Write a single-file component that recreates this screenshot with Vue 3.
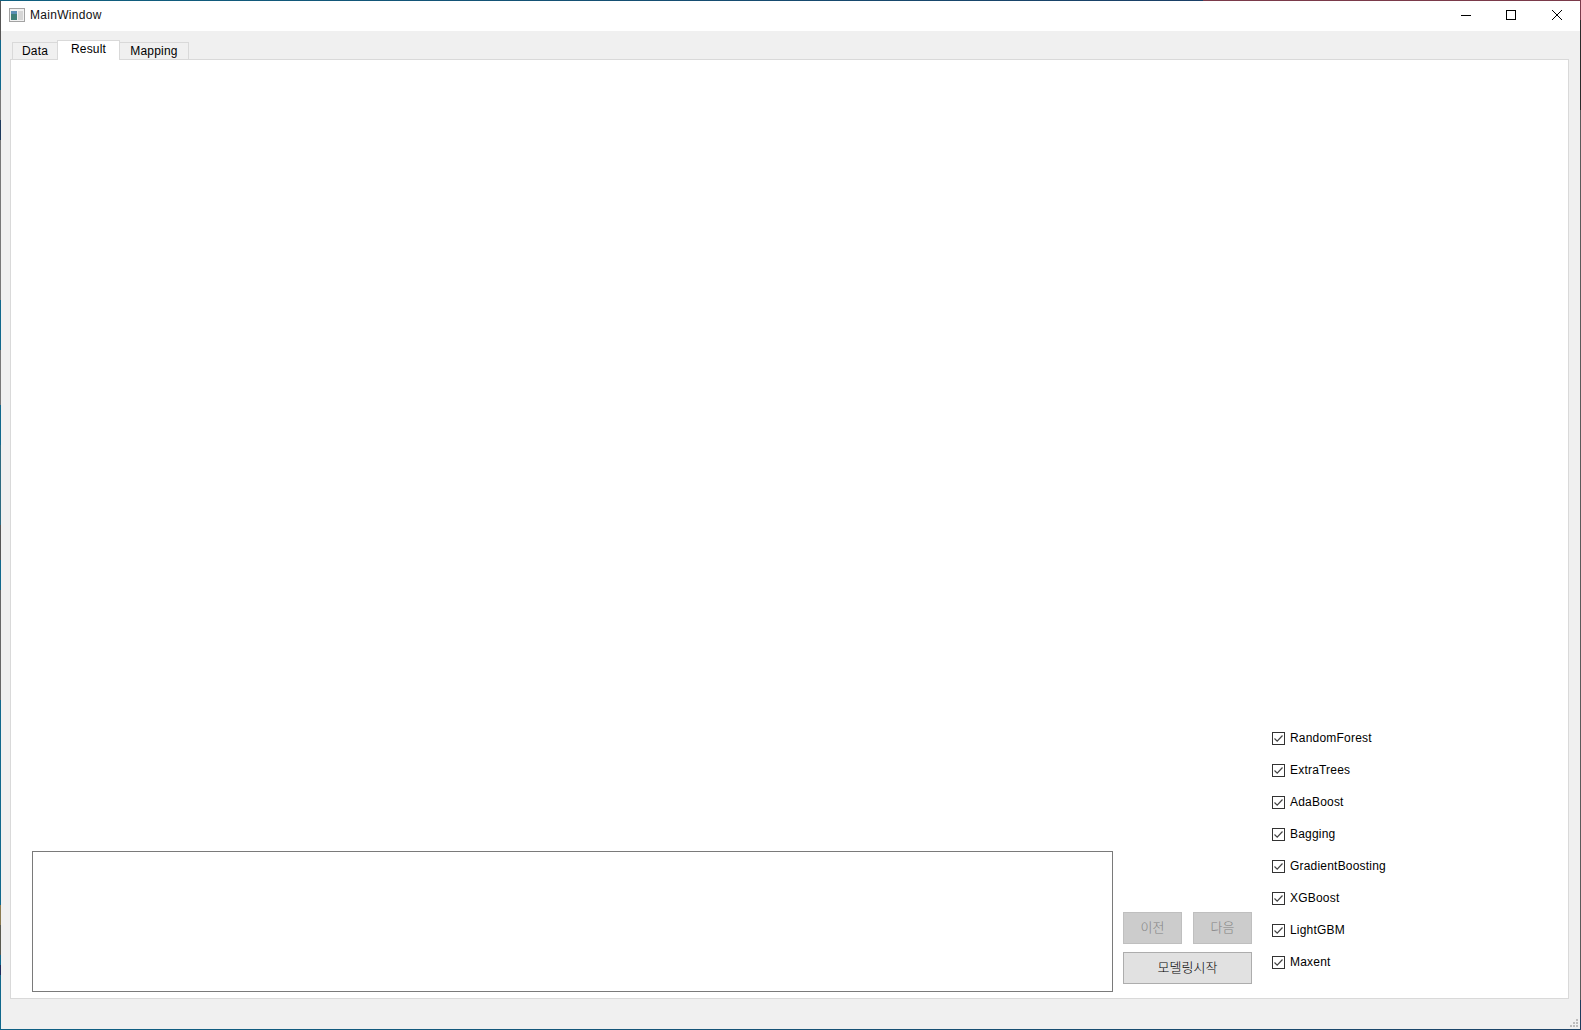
<script setup>
const models = ['RandomForest', 'ExtraTrees', 'AdaBoost', 'Bagging', 'GradientBoosting', 'XGBoost', 'LightGBM', 'Maxent']
const tabs = ['Data', 'Result', 'Mapping']
</script>

<template>
  <div class="window">
    <header class="titlebar">
      <svg class="appicon" width="16" height="14" viewBox="0 0 16 14">
        <rect x="0.5" y="0.5" width="15" height="13" fill="#f2f2f2" stroke="#a3a3a3" />
        <rect x="2" y="3" width="6" height="9" fill="#3f7f78" />
        <rect x="2" y="3" width="6" height="3" fill="#5b8fb5" />
        <rect x="9" y="3" width="5" height="9" fill="#d6d6d6" />
      </svg>
      <span class="title">MainWindow</span>
      <div class="controls">
        <svg width="12" height="12" viewBox="0 0 12 12"><path d="M1 6.5H11" stroke="#000" fill="none" /></svg>
        <svg width="12" height="12" viewBox="0 0 12 12"><rect x="1.5" y="1.5" width="9" height="9" stroke="#000" fill="none" /></svg>
        <svg class="close" width="12" height="12" viewBox="0 0 12 12"><path d="M1 1L11 11M11 1L1 11" stroke="#000" fill="none" /></svg>
      </div>
    </header>
    <main class="client">
      <nav class="tabs">
        <div v-for="t in tabs" :key="t" class="tab" :class="{ active: t === 'Result' }">{{ t }}</div>
      </nav>
      <section class="panel">
        <div class="bottom">
          <div class="textbox"></div>
          <div class="actions">
            <div class="nav-row">
              <button class="btn disabled">이전</button>
              <button class="btn disabled">다음</button>
            </div>
            <button class="btn">모델링시작</button>
          </div>
          <div class="checks">
            <label v-for="m in models" :key="m" class="check">
              <svg width="13" height="13" viewBox="0 0 13 13">
                <rect x="0.5" y="0.5" width="12" height="12" fill="#fff" stroke="#333" />
                <path d="M2.5 6.5L5.2 9.2L10.5 3.5" fill="none" stroke="#444" stroke-width="1.2" />
              </svg>
              <span>{{ m }}</span>
            </label>
          </div>
        </div>
      </section>
      <div class="status">
        <svg width="8" height="8" viewBox="0 0 8 8" fill="#bdbdbd">
          <rect x="6" y="0" width="2" height="2" />
          <rect x="3" y="3" width="2" height="2" /><rect x="6" y="3" width="2" height="2" />
          <rect x="0" y="6" width="2" height="2" /><rect x="3" y="6" width="2" height="2" /><rect x="6" y="6" width="2" height="2" />
        </svg>
      </div>
    </main>
  </div>
</template>

<style>
html, body { margin: 0; padding: 0; background: #f0f0f0; overflow: hidden; }
</style>

<style scoped>
.window {
  width: 1581px;
  height: 1030px;
  box-sizing: border-box;
  padding: 1px;
  display: flex;
  flex-direction: column;
  background-color: #f0f0f0;
  background-repeat: no-repeat;
  background-image:
    linear-gradient(90deg, #0f6080 0, #1a3f66 1203px, #7a3a4a 1203px, #7a3a4a 100%),
    linear-gradient(90deg, #0f6084, #1d4468),
    linear-gradient(180deg,
      #555 0 40px, #10688c 40px 90px, #777 90px 120px, #1d3a5c 120px 140px,
      #777 140px 300px, #10688c 300px 350px, #777 350px 405px, #10688c 405px 445px,
      #2d6a80 445px 525px, #555 525px 560px, #10688c 560px 590px, #666 590px 700px,
      #10688c 700px 905px, #8a7a50 905px 925px, #5a5a50 925px 955px, #10688c 955px 965px,
      #1d2a5c 965px 975px, #10688c 975px 1030px),
    linear-gradient(180deg,
      #7a3a4a 0 20px, #2a2a2a 20px 110px, #5a5a5a 110px 1000px, #1d3a5c 1000px 1030px);
  background-size: 100% 1px, 100% 1px, 1px 100%, 1px 100%;
  background-position: 0 0, 0 100%, 0 0, 100% 0;
  font-family: "Liberation Sans", Arial, "Noto Sans CJK KR", sans-serif;
  font-size: 12px;
  letter-spacing: 0.2px;
  color: #000;
}
.titlebar {
  height: 30px;
  box-sizing: border-box;
  padding: 0 0 2px 8px;
  flex: none;
  background: #fff;
  display: flex;
  align-items: center;
}
.appicon { margin-right: 5px; }
.title { font-size: 12px; color: #111; letter-spacing: 0.3px; }
.controls {
  margin-left: auto;
  display: flex;
  gap: 33px;
  padding-right: 17px;
}
.close { margin-left: 1px; }
.client {
  flex: 1;
  display: flex;
  flex-direction: column;
  padding: 9px 11px 0 9px;
  min-height: 0;
}
.tabs {
  display: flex;
  height: 19px;
  align-items: flex-end;
  padding-left: 2px;
  flex: none;
}
.tab {
  height: 18px;
  box-sizing: border-box;
  border: 1px solid #d9d9d9;
  border-bottom: none;
  border-left-width: 0;
  line-height: 16px;
  margin-bottom: -1px;
  position: relative;
  z-index: 0;
  text-align: center;
}
.tab:first-child { border-left-width: 1px; width: 46px; }
.tab.active {
  height: 20px;
  width: 63px;
  line-height: 17px;
  background: #fff;
  border-left-width: 1px;
  z-index: 2;
  margin-left: -1px;
}
.tab:last-child { width: 69px; }
.panel {
  flex: 1;
  min-height: 0;
  background: #fff;
  border: 1px solid #d9d9d9;
  display: flex;
  flex-direction: column;
  justify-content: flex-end;
  padding: 0 20px 6px 21px;
  position: relative;
  z-index: 1;
}
.bottom {
  display: flex;
  align-items: flex-end;
}
.textbox {
  width: 1081px;
  height: 141px;
  box-sizing: border-box;
  flex: none;
  background: #fff;
  border: 1px solid #7a7a7a;
}
.actions {
  margin-left: 10px;
  width: 129px;
  display: flex;
  flex-direction: column;
  gap: 8px;
  padding-bottom: 8px;
}
.nav-row { display: flex; justify-content: space-between; }
.nav-row .btn { width: 59px; }
.btn {
  height: 32px;
  width: 129px;
  box-sizing: border-box;
  background: #e1e1e1;
  border: 1px solid #adadad;
  font: 300 13px "Noto Sans CJK KR", sans-serif;
  color: #000;
  padding: 0 0 4px;
}
.btn.disabled {
  background: #cccccc;
  border-color: #bfbfbf;
  color: #838383;
}
.checks {
  margin-left: 20px;
  display: flex;
  flex-direction: column;
  gap: 19px;
  padding-bottom: 23px;
}
.check {
  display: flex;
  align-items: center;
  gap: 5px;
  height: 13px;
  line-height: 13px;
}
.status {
  height: 30px;
  box-sizing: border-box;
  flex: none;
  display: flex;
  justify-content: flex-end;
  align-items: flex-end;
  margin-right: -9px;
  padding-bottom: 2px;
}
</style>
